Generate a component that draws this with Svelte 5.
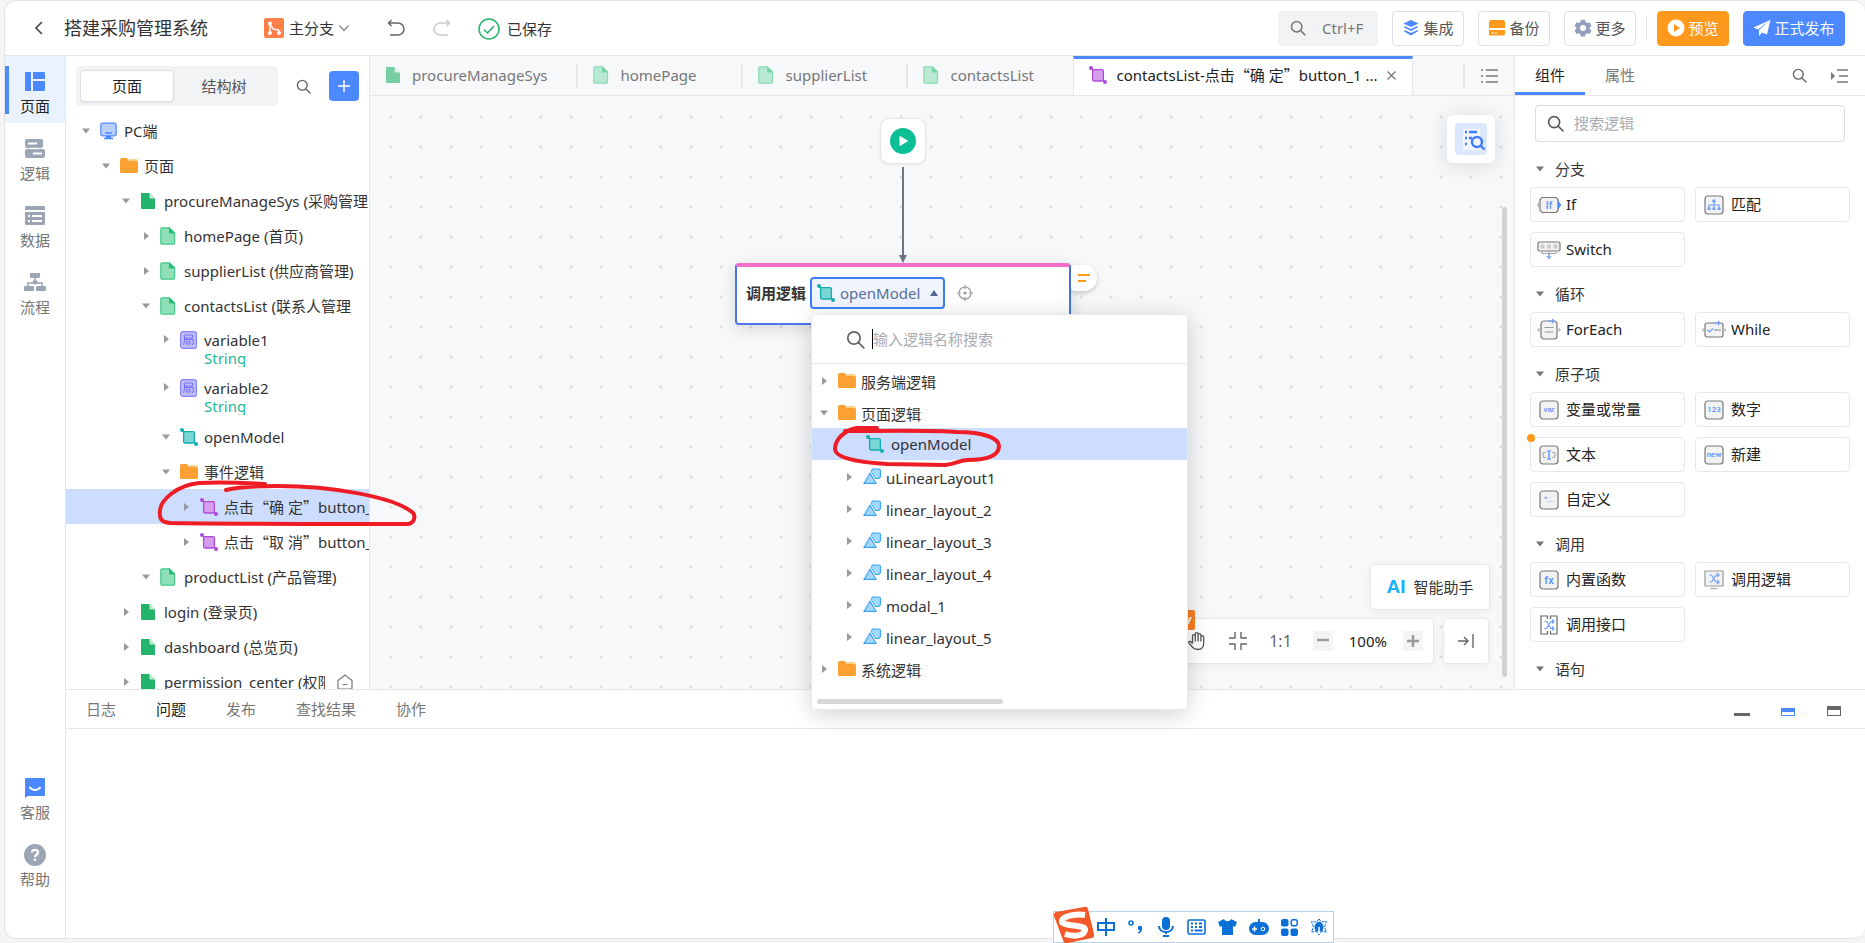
<script lang="ts">
  type Row = { depth: number; icon: string; label: string; open?: boolean; type?: string; active?: boolean; home?: boolean; cut?: boolean };

  const rail = [
    { icon: 'layout', label: '页面' },
    { icon: 'logic', label: '逻辑' },
    { icon: 'data', label: '数据' },
    { icon: 'flow', label: '流程' },
  ];

  const tree: Row[] = [
    { depth: 0, icon: 'pc', label: 'PC端', open: true },
    { depth: 1, icon: 'folder', label: '页面', open: true },
    { depth: 2, icon: 'page', label: 'procureManageSys (采购管理系统)', open: true },
    { depth: 3, icon: 'subpage', label: 'homePage (首页)' },
    { depth: 3, icon: 'subpage', label: 'supplierList (供应商管理)' },
    { depth: 3, icon: 'subpage', label: 'contactsList (联系人管理)', open: true, cut: true },
    { depth: 4, icon: 'local', label: 'variable1', type: 'String' },
    { depth: 4, icon: 'local', label: 'variable2', type: 'String' },
    { depth: 4, icon: 'teal', label: 'openModel', open: true },
    { depth: 4, icon: 'folder', label: '事件逻辑', open: true },
    { depth: 5, icon: 'purple', label: '点击“确 定”button_1', active: true },
    { depth: 5, icon: 'purple', label: '点击“取 消”button_2' },
    { depth: 3, icon: 'subpage', label: 'productList (产品管理)', open: true },
    { depth: 2, icon: 'page', label: 'login (登录页)' },
    { depth: 2, icon: 'page', label: 'dashboard (总览页)' },
    { depth: 2, icon: 'page', label: 'permission_center (权限中心)', home: true },
  ];

  const tabs = [
    { icon: 'page', label: 'procureManageSys' },
    { icon: 'subpage', label: 'homePage' },
    { icon: 'subpage', label: 'supplierList' },
    { icon: 'subpage', label: 'contactsList' },
  ];

  const options = [
    { level: 0, icon: 'folder', label: '服务端逻辑' },
    { level: 0, icon: 'folder', label: '页面逻辑', open: true },
    { level: 1, icon: 'teal', label: 'openModel', active: true },
    { level: 1, icon: 'shape', label: 'uLinearLayout1' },
    { level: 1, icon: 'shape', label: 'linear_layout_2' },
    { level: 1, icon: 'shape', label: 'linear_layout_3' },
    { level: 1, icon: 'shape', label: 'linear_layout_4' },
    { level: 1, icon: 'shape', label: 'modal_1' },
    { level: 1, icon: 'shape', label: 'linear_layout_5' },
    { level: 0, icon: 'folder', label: '系统逻辑' },
  ];

  const groups = [
    { title: '分支', items: [['if', 'If'], ['match', '匹配'], ['switch', 'Switch']] },
    { title: '循环', items: [['foreach', 'ForEach'], ['while', 'While']] },
    { title: '原子项', items: [['var', '变量或常量'], ['123', '数字'], ['text', '文本'], ['new', '新建'], ['^...', '自定义']] },
    { title: '调用', items: [['fx', '内置函数'], ['call', '调用逻辑'], ['api', '调用接口']] },
    { title: '语句', items: [] },
  ];

  const bottomTabs = ['日志', '问题', '发布', '查找结果', '协作'];
  let bottomTab = $state('问题');
  let keyword = $state('');
  let logicKeyword = $state('');
</script>

{#snippet label(text: string)}
  {#each text.split(/([“”])/) as part}{#if part === '“' || part === '”'}<span class="quote">{part}</span>{:else}{part}{/if}{/each}
{/snippet}

{#snippet search(size: number)}
  <svg width={size} height={size} viewBox="0 0 16 16" fill="none" stroke="currentColor" stroke-width="1.5" stroke-linecap="round">
    <circle cx="6.7" cy="6.7" r="5.2" /><path d="M10.6 10.6 15 15" />
  </svg>
{/snippet}

{#snippet arrow(open: boolean | undefined)}
  <svg class="arrow" width="16" height="16" viewBox="0 0 16 16" fill="currentColor">
    {#if open}<path d="M4 5.5h8L8 10.5z" />{:else}<path d="M6 4v8l5-4z" />{/if}
  </svg>
{/snippet}

{#snippet icon(name: string)}
  <svg class="icon" width="18" height="18" viewBox="0 0 18 18" fill="none">
    {#if name === 'pc'}
      <rect x=".8" y="1.2" width="15.4" height="12.6" rx="2" fill="#b9d0ff" stroke="#4c88ff" stroke-width="1.2" />
      <path d="M5 11h7M4 16.5h9" stroke="#4c88ff" stroke-width="1.3" /><path d="M6 14h5v2.5H6z" fill="#4c88ff" />
    {:else if name === 'folder'}
      <path d="M9 2h7a1.5 1.5 0 0 1 1.5 1.5V8H9z" fill="#ffd08c" />
      <path d="M0 2.5A1.5 1.5 0 0 1 1.5 1H7l2 3h7.5A1.5 1.5 0 0 1 18 5.5v9a1.5 1.5 0 0 1-1.5 1.5h-15A1.5 1.5 0 0 1 0 14.5z" fill="#fba134" />
    {:else if name === 'page'}
      <path d="M1 1h8.500L15 6.500V17H2a1 1 0 0 1-1-1z" fill="#24b36b" /><path d="M9.500 1 15 6.500h-4.500a1 1 0 0 1-1-1z" fill="#bdebd3" />
    {:else if name === 'subpage'}
      <path d="M2 .8h7.500l5 5V16a1.200 1.200 0 0 1-1.200 1.200H2A1.200 1.200 0 0 1 .8 16V2A1.200 1.200 0 0 1 2 .8z" fill="#8fe0b8" stroke="#43cb8a" stroke-width="1.200" />
      <path d="M9 .5 15 6.500h-5a1 1 0 0 1-1-1z" fill="#22bd70" />
    {:else if name === 'local'}
      <rect x=".6" y=".6" width="15.800" height="16.800" rx="2.500" fill="#bfbdff" stroke="#8583fa" stroke-width="1.200" />
      <path d="M4.500 4h8v3h-8zM4.500 7v3.500L3.500 14M4.500 8.500h9l-.5 5h-1.500M6.500 10.500h3.500v2.500H6.500z" stroke="#7572f5" />
    {:else if name === 'teal' || name === 'purple'}
      {@const c = name === 'teal' ? '#11aeb0' : '#ad4bd8'}
      <path d="M2 2l3 3M13 13l3 3" stroke={c} stroke-width="1.400" />
      <rect x="3.600" y="3.600" width="10.800" height="11.400" rx="1.500" fill={name === 'teal' ? '#7ad5d5' : '#d69cee'} stroke={c} stroke-width="1.300" />
      <circle cx="2" cy="2" r="2" fill={c} /><circle cx="16" cy="16" r="2" fill={c} />
    {:else if name === 'shape'}
      <path d="M9.500 1h6a2 2 0 0 1 2 2v4.500a3 3 0 0 1-3 3h-2L8 4z" fill="#a5d8ff" stroke="#3ba7fb" stroke-width="1.200" />
      <path d="M7 5.200 1 15.400h12z" fill="#8dcdff" stroke="#fff" stroke-width="3" /><path d="M7 5.200 1 15.400h12z" fill="#a5d8ff" stroke="#3ba7fb" stroke-width="1.200" />
    {/if}
  </svg>
{/snippet}

{#snippet railIcon(name: string)}
  <svg width="22" height="22" viewBox="0 0 22 22" fill="#9ca5b5">
    {#if name === 'layout'}
      <path fill="#4c88ff" d="M2 1h5v19H2a1 1 0 0 1-1-1V2a1 1 0 0 1 1-1zM9 1h11a1 1 0 0 1 1 1v6H9zM9 10h12v9a1 1 0 0 1-1 1H9z" />
    {:else if name === 'logic'}
      <rect width="18" height="9" x="1" y="1" rx="2" /><rect x="1" y="11" width="20" height="9" rx="2" />
      <path d="M4 5.500h9M9 15.500h9" stroke="#fff" stroke-width="2" /><path d="M7 10.500h8" stroke="#fff" stroke-width="1.500" />
    {:else if name === 'data'}
      <path d="M2 1h18a1 1 0 0 1 1 1v3H1V2a1 1 0 0 1 1-1z" /><path d="M1 7h20v12a1 1 0 0 1-1 1H2a1 1 0 0 1-1-1z" />
      <path d="M4 11h2M8 11h10M4 16h2M8 16h10" stroke="#fff" stroke-width="2" />
    {:else if name === 'flow'}
      <rect x="6" y="1" width="10" height="5" rx="1" /><rect y="14" width="10" height="5" rx="1" /><rect x="12" y="14" width="10" height="5" rx="1" />
      <path d="M4 14v-3h14v3M11 5v6" fill="none" stroke="#9ca5b5" stroke-width="1.500" /><path d="m11 7 3 3-3 3-3-3z" />
    {:else if name === 'chat'}
      <path fill="#4c88ff" d="M2 1h18a1 1 0 0 1 1 1v16a1 1 0 0 1-1 1H4l-3 2V2a1 1 0 0 1 1-1z" /><path d="M5.500 10c3 4 8 4 11 0" fill="none" stroke="#fff" stroke-width="2" />
    {:else}
      <circle cx="11" cy="11" r="11" /><path d="M8 8.500c.2-3.500 6-3.500 6 0 0 2-3 2-3 4.500" fill="none" stroke="#fff" stroke-width="2.400" /><rect x="9.800" y="14.500" width="2.400" height="2.400" fill="#fff" />
    {/if}
  </svg>
{/snippet}

{#snippet blockIcon(name: string)}
  <svg class="block-icon" width="24" height="24" viewBox="0 0 24 24" fill="none" stroke="#777" stroke-width="1.200">
    {#if name === 'if'}
      <path d="M5 4.500h14l2 2v11l-2 2H5l-2-2v-11z" fill="#f2f2f3" /><path d="M2.500 9 .8 12l1.700 3" stroke="#aaa" /><path d="M21.500 9v6l2-3z" fill="#4c88ff" stroke="#4c88ff" />
      <text x="12" y="16" class="b9">If</text>
    {:else if name === 'match'}
      <rect x="3" y="3" width="18" height="18" rx="3" fill="#f2f2f3" />
      <path d="M12 8v8M7 15v-3h10v3" stroke="#6f9eff" /><circle cx="12" cy="8" r="1.700" fill="#6f9eff" stroke="none" /><path d="M5.500 14.500h3v2.500h-3zM10.500 14.500h3v2.500h-3zM15.500 14.500h3v2.500h-3z" fill="#6f9eff" stroke="none" />
    {:else if name === 'switch'}
      <rect x="1" y="4" width="22" height="9" rx="1.500" fill="#f2f2f3" /><path d="M3.500 6.500h4v4h-4zM10 6.500h4v4h-4zM16.500 6.500h4v4h-4z" fill="#ccc" stroke="none" />
      <path d="M5 13v2.500h14V13M12 13v4" stroke="#aaa" /><path d="M12 15v5M10 18l2 2.500 2-2.500" stroke="#6f9eff" />
    {:else if name === 'foreach'}
      <rect x="4" y="3" width="16" height="18" rx="3" fill="#f2f2f3" /><path d="M7.500 9.500h9M7.500 14h9" stroke="#999" /><path d="M2.500 10.500.8 12l1.700 1.500M21.500 10.500l1.700 1.500-1.700 1.500" stroke="#aaa" />
      <path d="M11 3h6M15 1l2 2-2 2" stroke="#6f9eff" />
    {:else if name === 'while'}
      <rect x="3" y="5" width="18" height="14" rx="2" fill="#f2f2f3" /><path d="M12 12h7" stroke="#999" /><path d="M1.500 10.500.3 12l1.200 1.500M22.500 10.500l1.200 1.500-1.200 1.500" stroke="#aaa" />
      <path d="m5.500 12 2 2 3.500-3.500M11 5h7M16 3l2 2-2 2" stroke="#6f9eff" />
    {:else if name === 'text'}
      <rect x="3" y="3" width="18" height="18" rx="3" fill="#f2f2f3" /><path d="M9 9.500H7L6 11v2l1 1.500h2M15 9.500h2l1 1.500v2l-1 1.500h-2" stroke="#aaa" /><path d="M10 8h4M12 8v8M10 16h4" stroke="#4c88ff" />
    {:else if name === 'call' || name === 'api'}
      {#if name === 'call'}
        <path d="M3 3h18v15H3z" fill="#f2f2f3" stroke="#999" /><path d="M8.500 20.500h7" stroke="#aaa" />
      {:else}
        <path d="M10.500 6V3H4v18h6.500v-3M13.500 6V3H20v18h-6.500v-3" stroke="#666" />
      {/if}
      <g stroke="#6f9eff" transform={name === 'api' ? 'translate(0 1.500)' : undefined}>
        <path d="M7.500 7h2l4.500 7h2.500M7.500 14h2l4.500-7h2.500M15 5l2 2-2 2M15 12l2 2-2 2" />
      </g>
    {:else}
      <rect x="3" y="3" width="18" height="18" rx="3" fill="#f2f2f3" />
      <text x="12" y={name === 'fx' ? 16 : 14} class={name === 'fx' ? 'b10' : 'b7'}>{name}</text>
    {/if}
  </svg>
{/snippet}

<div class="app" lang="zh-CN">
  <header>
    <button class="plain" aria-label="返回"><svg width="10" height="16" viewBox="0 0 10 16" fill="none" stroke="#444" stroke-width="1.600"><path d="M8 2 2 8l6 6" /></svg></button>
    <h1>搭建采购管理系统</h1>
    <button class="plain branch">
      <svg width="20" height="20" viewBox="0 0 20 20" fill="none" stroke="#fff" stroke-width="1.400">
        <rect width="20" height="20" rx="2" fill="#ff7f4a" stroke="none" />
        <path d="M6 6v8M6 8c4 0 1 4 5 3.500 3-.3 4 .5 4 2" /><g fill="#fff"><circle cx="6" cy="5.500" r="1.300" /><circle cx="6" cy="15" r="1.300" /><circle cx="15" cy="15" r="1.300" /></g>
      </svg>
      主分支
      <svg width="10" height="8" viewBox="0 0 10 8" fill="none" stroke="#888" stroke-width="1.200"><path d="m.5 1.500 4.500 5 4.500-5" /></svg>
    </button>
    <button class="plain undo" aria-label="撤销"><svg width="18" height="18" viewBox="0 0 18 18" fill="none" stroke="#666" stroke-width="1.500"><path d="M4.500 1 1.500 4l3 3M1.500 4h9.500a6 6 0 0 1 0 12H3" /></svg></button>
    <button class="plain redo" aria-label="重做" disabled><svg width="18" height="18" viewBox="0 0 18 18" fill="none" stroke="#ccc" stroke-width="1.500"><path d="m13.500 1 3 3-3 3M16.500 4H7a6 6 0 0 0 0 12h8" /></svg></button>
    <span class="saved">
      <svg width="22" height="22" viewBox="0 0 22 22" fill="none" stroke="#22b66c" stroke-width="1.500"><circle cx="11" cy="11" r="10" /><path d="m6 11.500 3.500 3.500L16 8" /></svg>
      已保存
    </span>
    <div class="actions">
      <button class="quick">{@render search(16)}<span>Ctrl+F</span></button>
      <button class="btn">
        <svg width="18" height="18" viewBox="0 0 18 18" fill="#4c88ff"><path d="m9 1 7.500 3.500L9 8 1.500 4.500z" /><path d="m1.500 8 1.700-.8L9 10l5.800-2.800 1.700.8L9 12z" /><path d="m1.500 12 1.700-.8L9 14l5.800-2.800 1.700.8L9 16.500z" /></svg>
        集成
      </button>
      <button class="btn">
        <svg width="18" height="18" viewBox="0 0 18 18" fill="#ff991c"><path d="M3 1h12a2 2 0 0 1 2 2v6H1V3a2 2 0 0 1 2-2zM1 11h16v4a1.500 1.500 0 0 1-1.500 1.500h-13A1.500 1.500 0 0 1 1 15z" /><path d="M4 14h1.500M7 14h1.500" stroke="#fff" stroke-width="1.500" /></svg>
        备份
      </button>
      <button class="btn">
        <svg width="18" height="18" viewBox="0 0 18 18" fill="#959dbd"><path fill-rule="evenodd" d="M7 .8h4l.6 2.300 1.600.9 2.300-.7 2 3.400-1.700 1.700v1.500l1.700 1.600-2 3.500-2.300-.7-1.600.9-.6 2.300H7l-.6-2.300-1.600-.9-2.300.7-2-3.500 1.700-1.600V8.400L.5 6.700l2-3.400 2.300.7 1.600-.9zM9 6a3 3 0 1 0 0 6 3 3 0 0 0 0-6z" /></svg>
        更多
      </button>
      <i class="divider"></i>
      <button class="btn preview">
        <svg width="18" height="18" viewBox="0 0 18 18"><circle cx="9" cy="9" r="8.500" fill="#fff" /><path d="M7 5v8l6-4z" fill="#ff991c" /></svg>
        预览
      </button>
      <button class="btn publish">
        <svg width="18" height="18" viewBox="0 0 18 18" fill="#fff"><path d="M17.500.8.5 8.500l4.500 2zM17.500.8 6 11v6l3-3.500 5 2z" /></svg>
        正式发布
      </button>
    </div>
  </header>

  <div class="body">
    <nav class="rail">
      {#each rail as item, i}
        <button class:active={i === 0}>{@render railIcon(item.icon)}<span>{item.label}</span></button>
      {/each}
      <span class="grow"></span>
      <button>{@render railIcon('chat')}<span>客服</span></button>
      <button>{@render railIcon('help')}<span>帮助</span></button>
    </nav>

    <div class="main">
      <div class="workspace">
        <aside class="pages">
          <div class="pages-head">
            <div class="segment"><button class="on">页面</button><button>结构树</button></div>
            <button class="plain" aria-label="搜索">{@render search(15)}</button>
            <button class="add" aria-label="新增"><svg width="14" height="14" viewBox="0 0 14 14" stroke="#fff" stroke-width="1.500"><path d="M7 1v12M1 7h12" /></svg></button>
          </div>
          <div class="tree" role="tree">
            {#each tree as row}
              <div class="row" class:typed={row.type} class:active={row.active} class:cut={row.cut} role="treeitem" aria-selected={!!row.active} tabindex="-1" style="padding-left: {12 + row.depth * 20}px">
                {@render arrow(row.open)}
                {@render icon(row.icon)}
                <span class="row-text">{@render label(row.label)}{#if row.type}<small>{row.type}</small>{/if}</span>
                {#if row.home}
                  <svg class="home" width="16" height="16" viewBox="0 0 16 16" fill="none" stroke="#777" stroke-width="1.200"><path d="M1 6.500 8 1l7 5.500V14a1 1 0 0 1-1 1H2a1 1 0 0 1-1-1zM5.500 10.500h5" /></svg>
                {/if}
              </div>
            {/each}
          </div>
        </aside>

        <section class="center">
          <div class="tabs">
            {#each tabs as tab}
              <button class="tab">{@render icon(tab.icon)}{tab.label}</button>
            {/each}
            <div class="tab current">
              {@render icon('purple')}<span>{@render label('contactsList-点击“确 定”button_1 ...')}</span>
              <button class="plain" aria-label="关闭"><svg width="9" height="9" viewBox="0 0 9 9" stroke="#777" stroke-width="1.200"><path d="m.5.5 8 8M8.500.5l-8 8" /></svg></button>
            </div>
            <button class="plain list" aria-label="标签列表"><svg width="17" height="14" viewBox="0 0 17 14" stroke="#777" stroke-width="1.300"><path d="M0 1h2M5 1h12M0 7h2M5 7h12M0 13h2M5 13h12" /></svg></button>
          </div>

          <div class="canvas">
            <div class="start"><svg width="26" height="26" viewBox="0 0 26 26"><circle cx="13" cy="13" r="13" fill="#0dbf94" /><path d="M10 8.500v9l7.500-4.500z" fill="#fff" stroke="#fff" stroke-linejoin="round" /></svg></div>
            <svg class="edge" width="8" height="96" viewBox="0 0 8 96"><path d="M4 0v90" stroke="#6b7789" stroke-width="2" /><path d="M0 88h8l-4 8z" fill="#6b7789" /></svg>

            <div class="node">
              <strong>调用逻辑</strong>
              <button class="picker" aria-haspopup="tree" aria-expanded="true">
                {@render icon('teal')}openModel<svg class="caret" width="8" height="6" viewBox="0 0 8 6" fill="#536692"><path d="m4 0 4 6H0z" /></svg>
              </button>
              <svg width="18" height="18" viewBox="0 0 18 18" fill="none" stroke="#999" stroke-width="1.200"><circle cx="9" cy="9" r="6" /><path d="M9 1v4M9 13v4M1 9h4M13 9h4" /><circle cx="9" cy="9" r="1" fill="#999" /></svg>
              <button class="note" aria-label="注释"><svg width="12" height="10" viewBox="0 0 12 10" stroke="#ff991c" stroke-width="2"><path d="M0 2h12M0 8h8" /></svg></button>
            </div>

            <div class="popover">
              <label class="finder">{@render search(19)}<i></i><input bind:value={keyword} placeholder="输入逻辑名称搜索" aria-label="输入逻辑名称搜索" /></label>
              {#each options as item}
                <div class="option" class:leaf={item.level === 1} class:active={item.active}>
                  {#if !item.active}{@render arrow(item.open)}{/if}
                  {@render icon(item.icon)}<span>{item.label}</span>
                  {#if item.active}
                    <svg class="mark" width="170" height="44" viewBox="0 0 170 44" fill="none" stroke="#ee1c25" stroke-width="4" stroke-linecap="round" stroke-linejoin="round">
                      <path d="M44 4H24C12 6 2 15 2 25c0 11 34 14 52 15l58 1c10-1 13-4 22-5 21 0 32-4 32-14 0-8-16-14-42-14-22-2-76-1-112-1" />
                    </svg>
                  {/if}
                </div>
              {/each}
              <div class="hscroll"></div>
            </div>

            <button class="locate" aria-label="查找逻辑">
              <svg width="32" height="32" viewBox="0 0 32 32" fill="none" stroke="#3f7dfa" stroke-width="2.400">
                <rect width="32" height="32" rx="4" fill="#dbe6ff" stroke="none" /><path d="M8 6h17v21H8z" fill="#f0f5ff" stroke="none" />
                <path d="M10 9h2M14 9h8M10 15h2M14 15h3M10 21h2" /><circle cx="22" cy="19" r="5" /><path d="m25.500 22.500 4 4" />
              </svg>
            </button>
            <button class="assistant">
              <b>AI</b>智能助手
            </button>
            <div class="vscroll"></div>
            <div class="zoombar">
              <span class="new">New</span>
              <button class="plain" aria-label="拖动">
                <svg width="20" height="20" viewBox="0 0 20 20" fill="none" stroke="#555" stroke-width="1.300" stroke-linejoin="round"><path d="M5.500 12V5a1.400 1.400 0 0 1 2.800 0v5V3a1.400 1.400 0 0 1 2.800 0v7-6a1.400 1.400 0 0 1 2.800 0v6-4a1.400 1.400 0 0 1 2.800 0v6c0 4-2 6.500-6 6.500-4 0-5-2-9-7 0-1.700 2-1.700 3.600.5z" /></svg>
              </button>
              <button class="plain" aria-label="适应画布"><svg width="20" height="20" viewBox="0 0 20 20" fill="none" stroke="#666" stroke-width="1.400"><path d="M7 1v6H1M13 1v6h6M7 19v-6H1M13 19v-6h6" /></svg></button>
              <button class="plain ratio">1:1</button>
              <button class="step" aria-label="缩小"><svg width="12" height="12" viewBox="0 0 12 12" stroke="#999" stroke-width="2.400"><path d="M0 5h12" /></svg></button>
              <span class="percent">100%</span>
              <button class="step" aria-label="放大"><svg width="12" height="12" viewBox="0 0 12 12" stroke="#999" stroke-width="2.400"><path d="M0 6h12M6 0v12" /></svg></button>
            </div>
            <button class="dock" aria-label="收起"><svg width="16" height="14" viewBox="0 0 16 14" fill="none" stroke="#666" stroke-width="1.400"><path d="M0 7h10M6 3l4 4-4 4M15 0v14" /></svg></button>
          </div>
        </section>

        <aside class="blocks">
          <div class="blocks-head">
            <button class="on">组件</button><button>属性</button>
            <span class="grow"></span>
            {@render search(15)}
            <svg width="17" height="14" viewBox="0 0 17 14" stroke="#777" stroke-width="1.300"><path d="M6 1h11M8 7h9M6 13h11" /><path d="M0 3v8l4-4z" fill="#777" stroke="none" /></svg>
          </div>
          <label class="field">{@render search(17)}<input bind:value={logicKeyword} placeholder="搜索逻辑" aria-label="搜索逻辑" /></label>
          {#each groups as group}
            <h2>{@render arrow(true)}{group.title}</h2>
            <div class="cards">
              {#each group.items as [name, text]}
                <button class="card" class:dot={name === 'text'}>{@render blockIcon(name)}<span>{text}</span></button>
              {/each}
            </div>
          {/each}
        </aside>
      </div>

      <section class="bottom">
        <div class="bottom-head">
          {#each bottomTabs as name}
            <button class:on={bottomTab === name} onclick={() => (bottomTab = name)}>{name}</button>
          {/each}
          <span class="grow"></span>
          <button class="size" aria-label="最小化"><svg width="16" height="12" viewBox="0 0 16 12" fill="#666"><path d="M0 8h16v3H0z" /></svg></button>
          <button class="size" aria-label="还原"><svg width="16" height="12" viewBox="0 0 16 12" fill="#4c88ff"><path fill-rule="evenodd" d="M1 3h14v8H1zm1 4v3h12V7z" /></svg></button>
          <button class="size" aria-label="最大化"><svg width="16" height="12" viewBox="0 0 16 12" fill="#666"><path fill-rule="evenodd" d="M1 1h14v10H1zm1 4v5h12V5z" /></svg></button>
        </div>
      </section>
    </div>
  </div>
</div>

<svg class="scribble" width="260" height="46" viewBox="0 0 260 46" fill="none" stroke="#ee1c25" stroke-width="4" stroke-linecap="round" stroke-linejoin="round">
  <path d="M108 4C90 3 66 2 42 3 20 5 4 20 3 30c-1 9 1 12 10 13 50 1 150 1 238 1 7-1 8-9 4-12C236 17 176 6 120 6c-22 0-38 1-51 4" />
</svg>

<div class="ime">
  <svg class="logo" width="40" height="38" viewBox="0 0 40 38"><path d="M2 6 30 1q3-1 4 2l6 25q1 3-2 4L14 37q-4 1-5-3L0 10q-1-3 2-4z" fill="#f4592a" /><path d="M31 9C24 8 9 9 8 15s24 3 23 9-11 7-20 4" fill="none" stroke="#fff" stroke-width="6" /></svg>
  <svg width="18" height="18" viewBox="0 0 18 18" fill="none" stroke="#0a70d8" stroke-width="2"><path d="M1 5h16v7H1zM9 0v18" /></svg>
  <svg width="18" height="18" viewBox="0 0 18 18" fill="none" stroke="#0a70d8" stroke-width="1.600"><circle cx="4" cy="5" r="2" /><circle cx="13" cy="10" r="2.200" fill="#0a70d8" stroke="none" /><path d="M14.300 10c0 3-1 4-3 5" /></svg>
  <svg width="18" height="20" viewBox="0 0 18 20" fill="none" stroke="#0a70d8" stroke-width="2"><rect x="6" y="1" width="6" height="11" rx="3" fill="#0a70d8" /><path d="M2 9c0 8 14 8 14 0M9 15v2M6 19h6" /></svg>
  <svg width="19" height="16" viewBox="0 0 19 16" fill="#fff" stroke="#0a70d8" stroke-width="1.600"><rect x="1" y="1" width="17" height="14" rx="1.500" /><path d="M4 4.500h2M8 4.500h2M12 4.500h3M4 8h2M8 8h2M12 8h3M4 11.500h2M7.500 11.500h8" stroke-width="2" /></svg>
  <svg width="19" height="18" viewBox="0 0 19 18" fill="#0a70d8"><path d="m6 1-6 3 2 5 2-1v9h11V8l2 1 2-5-6-3c-1 3-6 3-7 0z" /></svg>
  <svg width="20" height="18" viewBox="0 0 20 18" fill="#0a70d8"><rect y="4" width="20" height="13" rx="6.500" /><path d="M10 5V1" stroke="#0a70d8" stroke-width="2" /><path d="M3 11h5M5.500 8.500v5" stroke="#fff" stroke-width="1.500" /><circle cx="14" cy="11" r="1.800" fill="none" stroke="#fff" /></svg>
  <svg width="17" height="17" viewBox="0 0 17 17" fill="#0a70d8"><rect width="7.500" height="7.500" rx="2" /><rect y="9.500" width="7.500" height="7.500" rx="2" /><rect x="9.500" y="9.500" width="7.500" height="7.500" rx="2" /><rect x="10.200" y=".7" width="6" height="6" rx="2" fill="none" stroke="#0a70d8" stroke-width="1.500" /></svg>
  <svg width="18" height="18" viewBox="0 0 18 18" fill="none" stroke="#0a70d8"><path d="m9 1 2.500 3 5-.5-2 5.500 2 5-5-.5L9 17l-2.500-3.500-5 .5 2-5-2-5.500 5 .5z" stroke-dasharray="3 1" /><path d="M9 4c4 1 5 5 3 9H6C4 9 5 5 9 4z" fill="#0a70d8" /><path d="M9 9v7" stroke="#fff" stroke-width="1.500" /></svg>
</div>

<style>
  :global(body) { background: #f5f5f5; overflow: hidden; }
  .app {
    --blue: #4c88ff;
    --line: #e5e7ed;
    box-sizing: border-box;
    display: flex;
    flex-direction: column;
    height: calc(100vh - 4px);
    margin-left: 4px;
    border: 1px solid #e3e3e3;
    border-right: 0;
    border-radius: 12px;
    background: #fff;
    color: #333;
    font: 15px/20px "Noto Sans", "Noto Sans CJK SC", sans-serif;
  }
  .app *, .app *::before, .app *::after { box-sizing: border-box; }
  button, input { font: inherit; color: inherit; }
  button { padding: 0; border: 0; background: none; white-space: nowrap; cursor: pointer; }
  svg { flex: none; display: block; }
  .plain { display: flex; align-items: center; color: #666; }
  .grow { flex: 1; }
  .quote { font-family: "Noto Sans CJK SC", sans-serif; }
  .arrow { color: #999; }

  header { display: flex; align-items: center; height: 55px; padding: 0 20px 0 29px; border-bottom: 1px solid var(--line); }
  h1 { margin: 0 0 0 20px; font-size: 18px; line-height: 24px; font-weight: 400; white-space: nowrap; }
  .branch { gap: 5px; margin-left: 56px; color: #333; }
  .undo { margin-left: 38px; }
  .redo { margin-left: 28px; }
  .saved { display: flex; align-items: center; gap: 7px; margin-left: 27px; padding-top: 2px; }
  .actions { display: flex; align-items: center; gap: 14px; margin-left: auto; }
  .quick { display: flex; align-items: center; gap: 16px; width: 100px; height: 35px; padding-left: 12px; border-radius: 4px; background: #f2f3f5; color: #777; }
  .btn { display: flex; align-items: center; justify-content: center; gap: 3px; width: 72px; height: 35px; border: 1px solid #dcdfe9; border-radius: 4px; background: #fff; color: #555; }
  .divider { width: 1px; height: 25px; margin: 0 -4px; background: var(--line); }
  .preview { border-color: #ff991c; background: #ff991c; color: #fff; }
  .publish { width: 102px; border-color: var(--blue); background: var(--blue); color: #fff; }

  .body { display: flex; flex: 1; min-height: 0; }
  .rail { display: flex; flex-direction: column; width: 61px; padding-bottom: 42px; border-right: 1px solid var(--line); }
  .rail button { display: flex; flex-direction: column; align-items: center; gap: 3px; height: 67px; padding-top: 15px; color: #777; }
  .rail .active { background: linear-gradient(var(--blue), var(--blue)) 0 10px / 4px 48px no-repeat #ebf2ff; color: #222; }

  .main { display: flex; flex: 1; flex-direction: column; min-width: 0; }
  .workspace { display: flex; flex: 1; min-height: 0; }

  .pages { display: flex; flex-direction: column; width: 304px; border-right: 1px solid var(--line); overflow: hidden; }
  .pages-head { display: flex; align-items: center; gap: 18px; padding: 10px 10px 7px; }
  .segment { display: flex; align-items: center; width: 203px; height: 40px; padding: 4px; border-radius: 4px; background: #f2f3f5; }
  .segment button { flex: 1; height: 32px; border-radius: 4px; color: #555; }
  .segment .on { flex: none; width: 94px; background: #fff; border: 1px solid #dcdfe9; box-shadow: 0 1px 2px #0001; color: #222; }
  .add { display: grid; place-items: center; width: 30px; height: 30px; border-radius: 4px; background: var(--blue); }
  .tree { flex: 1; min-height: 0; overflow: hidden; }
  .row { display: flex; align-items: center; gap: 6px; height: 35px; white-space: nowrap; }
  .row.active { background: #cdddff; }
  .row.typed { align-items: flex-start; height: 48px; padding-top: 8px; }
  .row-text { flex: 1; min-width: 0; overflow: hidden; }
  .cut { padding-right: 18px; }
  small { display: block; font-size: 15px; color: #1db893; }
  .typed .row-text { line-height: 18px; }
  .home { margin: 0 16px 0 6px; }

  .center { display: flex; flex: 1; flex-direction: column; min-width: 0; background: #f7f8fa; }
  .tabs { display: flex; height: 40px; border-bottom: 1px solid var(--line); }
  .tab { position: relative; display: flex; flex: none; align-items: center; gap: 9px; min-width: 165px; padding: 0 31px 2px 15px; color: #777; }
  .tab:not(.current) .icon { opacity: .6; }
  .tab:not(.current)::after { content: ""; position: absolute; right: 0; top: 8px; width: 2px; height: 24px; background: var(--line); }
  .tab:nth-child(4)::after { display: none; }
  .current { gap: 9px; padding: 0 16px 4px 15px; border: 1px solid var(--line); border-top: 3px solid var(--blue); border-bottom: 0; background: #fff; color: #222; }
  .list { align-self: center; height: 24px; margin-left: auto; padding: 0 16px; border-left: 2px solid var(--line); }

  /* the dropdown hangs over the bottom panel, so the canvas must not clip */
  .canvas { position: relative; z-index: 1; flex: 1; background: radial-gradient(circle, #dcdee2 1px, transparent 2px) 6px 6px / 30px 30px; }
  .start { position: absolute; left: 510px; top: 22px; display: grid; place-items: center; width: 46px; height: 46px; border: 1px solid #e3e5e8; border-radius: 9px; background: #fff; box-shadow: 0 1px 3px #0001; }
  .edge { position: absolute; left: 529px; top: 71px; }
  .node { position: absolute; left: 365px; top: 167px; display: flex; align-items: center; width: 336px; height: 62px; padding: 0 0 4px 9px; border: 2px solid #4c74ee; border-top: 4px solid #f56bc8; border-radius: 4px; background: #fff; box-shadow: 0 4px 16px #0002; }
  .node strong { font-weight: 700; }
  .picker { display: flex; align-items: center; gap: 5px; width: 135px; height: 32px; margin: 0 11px 0 4px; padding: 0 5px; border: 2px solid #3b7ff8; border-radius: 4px; background: #eff4ff; color: #586d9b; }
  .caret { margin-left: auto; }
  .note { position: absolute; left: 334px; top: -2px; display: grid; place-items: center; width: 26px; height: 26px; border-radius: 4px 13px 13px 4px; background: #fff; box-shadow: 0 2px 5px #0003; }

  .popover { position: absolute; z-index: 3; left: 442px; top: 219px; width: 375px; padding-bottom: 5px; border-radius: 4px; background: #fff; box-shadow: 0 0 0 1px #e8eaee, 0 4px 24px #0003; }
  .finder { display: flex; align-items: center; height: 49px; padding-left: 34px; border-bottom: 1px solid var(--line); color: #666; }
  .finder i { width: 1px; height: 20px; margin-left: 7px; background: #000; }
  .finder input, .field input { flex: 1; min-width: 0; padding: 0; border: 0; outline: 0; background: none; }
  input::placeholder { color: #aaacb1; opacity: 1; }
  .option { position: relative; display: flex; align-items: center; height: 32px; padding: 4px 0 0 4px; }
  .option .icon { margin: 0 5px 2px 6px; }
  .option .arrow { margin-bottom: 2px; }
  .option.leaf { padding-left: 29px; }
  .option.active { padding: 0 0 0 48px; background: #cdddff; }
  .option.active .icon { margin: 0 7px 0 6px; }
  .mark { position: absolute; left: 21px; top: -4px; z-index: 1; }
  .hscroll { width: 186px; height: 5px; margin: 15px 0 0 5px; border-radius: 3px; background: #d6d6d6; }

  .locate, .assistant, .zoombar, .dock { position: absolute; display: flex; align-items: center; justify-content: center; border-radius: 4px; background: #fff; box-shadow: 0 0 0 1px #e6e8ec, 0 2px 8px #0001; }
  .locate { right: 19px; top: 19px; width: 48px; height: 48px; border-radius: 6px; box-shadow: 0 2px 20px #0002; }
  .assistant { right: 25px; bottom: 80px; gap: 8px; width: 118px; height: 44px; }
  .assistant b { font: 700 19px/24px "Liberation Sans", sans-serif; color: #16b0fb; }
  .vscroll { position: absolute; right: 7px; top: 111px; bottom: 12px; width: 5px; border-radius: 3px; background: #d0d2d4; }
  .zoombar { right: 81px; bottom: 26px; gap: 21px; height: 44px; padding: 0 10px 0 22px; }
  .new { position: absolute; left: -3px; top: -9px; padding: 0 4px; border-radius: 2px; background: #fa7d23; color: #fff; font: italic 700 12px/20px "Noto Sans", sans-serif; }
  .ratio { font-size: 16px; }
  .step { display: grid; place-items: center; width: 20px; height: 20px; background: #f4f4f4; }
  .percent { margin: 0 -5px; color: #222; }
  .dock { right: 26px; bottom: 26px; width: 44px; height: 44px; }

  .blocks { width: 351px; flex: none; border-left: 1px solid var(--line); overflow: hidden; }
  .blocks-head { display: flex; align-items: center; gap: 24px; height: 40px; padding-right: 17px; border-bottom: 1px solid var(--line); color: #666; }
  .blocks-head button { align-self: stretch; padding-bottom: 1px; color: #777; }
  .blocks-head .on { width: 70px; margin-right: -4px; border-bottom: 3px solid var(--blue); padding: 2px 0 0; color: #222; }
  .field { display: flex; align-items: center; gap: 10px; height: 37px; margin: 9px 20px 0; padding-left: 11px; border: 1px solid #d9dce8; border-radius: 4px; color: #555; }
  .field input { padding-bottom: 2px; }
  h2 { display: flex; align-items: center; gap: 7px; height: 45px; margin: 0; padding: 8px 0 0 17px; font-size: 15px; font-weight: 400; }
  h2 .arrow { color: #777; }
  .cards { display: grid; grid-template-columns: 1fr 1fr; gap: 10px; padding: 0 15px; }
  .card { position: relative; display: flex; align-items: center; gap: 5px; height: 35px; padding-left: 6px; border: 1px solid #e6e8ef; border-radius: 4px; background: #fff; color: #222; }
  .card span { padding-bottom: 2px; }
  .dot::before { content: ""; position: absolute; left: -4px; top: -4px; width: 8px; height: 8px; border-radius: 50%; background: #ff991c; }
  .block-icon text { fill: #5b91ff; stroke: none; text-anchor: middle; font-family: Roboto, sans-serif; font-weight: 500; }
  .b7 { font-size: 8px; }
  .b9 { font-size: 10px; }
  .b10 { font-size: 11px; }

  .bottom { height: 249px; border-top: 1px solid var(--line); }
  .bottom-head { display: flex; align-items: center; gap: 40px; height: 39px; padding: 0 23px 0 20px; border-bottom: 1px solid var(--line); color: #777; }
  .bottom-head .on { color: #222; }
  .bottom-head .size { margin-left: -10px; padding-top: 4px; }

  .scribble { position: absolute; left: 157px; top: 480px; z-index: 2; pointer-events: none; }
  .ime { position: absolute; right: 531px; bottom: 0; z-index: 4; display: flex; align-items: center; gap: 12px; box-sizing: border-box; height: 32px; padding: 0 5px 0 43px; border: 1px solid #bcd0e8; background: #fff; }
  .logo { position: absolute; left: 0; bottom: -2px; }
</style>
